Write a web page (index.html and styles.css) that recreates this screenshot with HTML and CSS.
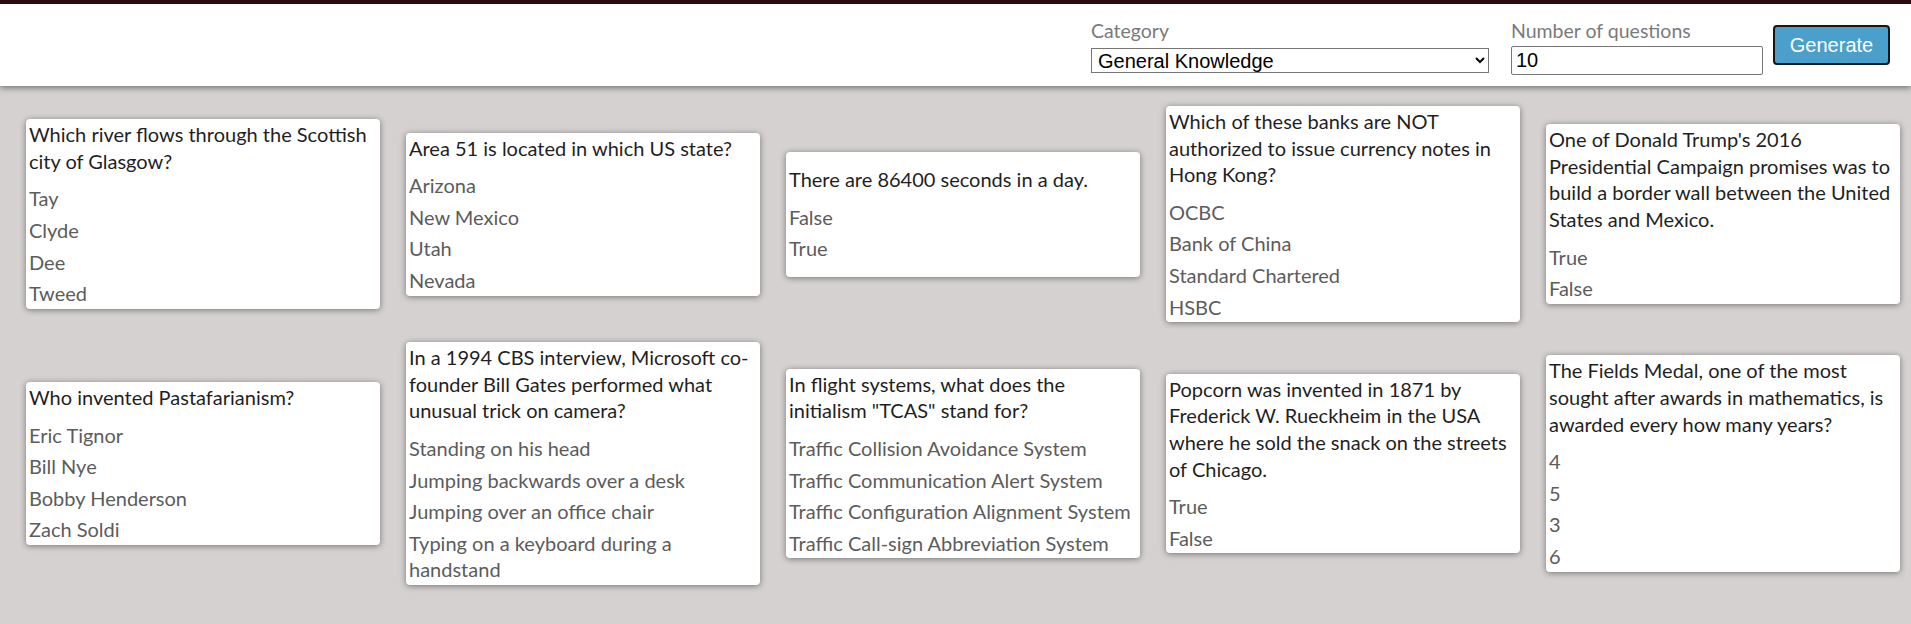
FILE: index.html
```html
<!DOCTYPE html>
<html lang="en">
<head>
<meta charset="utf-8">
<title>Trivia</title>
<link rel="stylesheet" href="styles.css">
</head>
<body>
<header class="topbar">
  <form class="controls">
    <label class="field field-category">
      <span class="field-label">Category</span>
      <select class="select">
        <option>General Knowledge</option>
      </select>
    </label>
    <label class="field field-number">
      <span class="field-label">Number of questions</span>
      <input class="input" type="text" value="10">
    </label>
    <button type="button" class="btn">Generate</button>
  </form>
</header>
<main class="cards">
  <article class="card">
    <p class="question">Which river flows through the Scottish city of Glasgow?</p>
    <p class="answer">Tay</p>
    <p class="answer">Clyde</p>
    <p class="answer">Dee</p>
    <p class="answer">Tweed</p>
  </article>
  <article class="card">
    <p class="question">Area 51 is located in which US state?</p>
    <p class="answer">Arizona</p>
    <p class="answer">New Mexico</p>
    <p class="answer">Utah</p>
    <p class="answer">Nevada</p>
  </article>
  <article class="card">
    <p class="question">There are 86400 seconds in a day.</p>
    <p class="answer">False</p>
    <p class="answer">True</p>
  </article>
  <article class="card">
    <p class="question">Which of these banks are NOT authorized to issue currency notes in Hong Kong?</p>
    <p class="answer">OCBC</p>
    <p class="answer">Bank of China</p>
    <p class="answer">Standard Chartered</p>
    <p class="answer">HSBC</p>
  </article>
  <article class="card">
    <p class="question">One of Donald Trump's 2016 Presidential Campaign promises was to build a border wall between the United States and Mexico.</p>
    <p class="answer">True</p>
    <p class="answer">False</p>
  </article>
  <article class="card">
    <p class="question">Who invented Pastafarianism?</p>
    <p class="answer">Eric Tignor</p>
    <p class="answer">Bill Nye</p>
    <p class="answer">Bobby Henderson</p>
    <p class="answer">Zach Soldi</p>
  </article>
  <article class="card">
    <p class="question">In a 1994 CBS interview, Microsoft co-founder Bill Gates performed what unusual trick on camera?</p>
    <p class="answer">Standing on his head</p>
    <p class="answer">Jumping backwards over a desk</p>
    <p class="answer">Jumping over an office chair</p>
    <p class="answer">Typing on a keyboard during a handstand</p>
  </article>
  <article class="card">
    <p class="question">In flight systems, what does the initialism "TCAS" stand for?</p>
    <p class="answer">Traffic Collision Avoidance System</p>
    <p class="answer">Traffic Communication Alert System</p>
    <p class="answer">Traffic Configuration Alignment System</p>
    <p class="answer">Traffic Call-sign Abbreviation System</p>
  </article>
  <article class="card">
    <p class="question">Popcorn was invented in 1871 by Frederick W. Rueckheim in the USA where he sold the snack on the streets of Chicago.</p>
    <p class="answer">True</p>
    <p class="answer">False</p>
  </article>
  <article class="card">
    <p class="question">The Fields Medal, one of the most sought after awards in mathematics, is awarded every how many years?</p>
    <p class="answer">4</p>
    <p class="answer">5</p>
    <p class="answer">3</p>
    <p class="answer">6</p>
  </article>
</main>
</body>
</html>
```
FILE: styles.css
```css
html, body {
  margin: 0;
  padding: 0;
}
body {
  background: #d5d1d0;
  font-family: Lato, "Open Sans", sans-serif;
  font-size: 20px;
  line-height: 1.33;
  min-height: 624px;
}

.topbar {
  background: #ffffff;
  border-top: 4px solid #2b0a0e;
  height: 86px;
  box-sizing: border-box;
  box-shadow: 0 2px 6px rgba(0, 0, 0, 0.45);
  position: relative;
}

.controls {
  display: flex;
  justify-content: flex-end;
  align-items: flex-start;
  padding: 13px 21px 0 0;
  margin: 0;
}

.field {
  display: flex;
  flex-direction: column;
}
.field-category {
  margin-right: 22px;
}
.field-number {
  margin-right: 10px;
}

.field-label {
  color: #7a7a7a;
  font-size: 19.5px;
  line-height: 27px;
}

.select {
  width: 398px;
  height: 25px;
  margin-top: 4px;
  font-family: "Liberation Sans", Arial, sans-serif;
  font-size: 20px;
  color: #000;
  background: #fff;
  border: 1px solid #767676;
  border-radius: 0;
  padding: 0 2px;
  box-sizing: border-box;
}

.input {
  width: 252px;
  height: 29px;
  margin-top: 2px;
  font-family: "Liberation Sans", Arial, sans-serif;
  font-size: 20px;
  color: #000;
  border: 1px solid #767676;
  border-radius: 2px;
  padding: 0 4px;
  box-sizing: border-box;
}

.btn {
  width: 117px;
  height: 40px;
  margin-top: 8px;
  font-family: "Liberation Sans", Arial, sans-serif;
  font-size: 20px;
  color: #ffffff;
  background: #4a9fcb;
  border: 2px solid #161616;
  border-radius: 4px;
  padding: 0;
}

.cards {
  display: flex;
  flex-wrap: wrap;
  align-items: center;
  column-gap: 26px;
  row-gap: 20px;
  padding: 20px 0 0 26px;
}

.card {
  width: 354px;
  min-height: 125px;
  box-sizing: border-box;
  background: #ffffff;
  border-radius: 4px;
  box-shadow: 0 1px 6px rgba(0, 0, 0, 0.45);
  padding: 2px 3px 2px;
  display: flex;
  flex-direction: column;
  justify-content: center;
}

.question {
  margin: 0 0 6px;
  color: #1f1f1f;
}

.answer {
  margin: 5px 0 0;
  color: #5c5c5c;
}
```
